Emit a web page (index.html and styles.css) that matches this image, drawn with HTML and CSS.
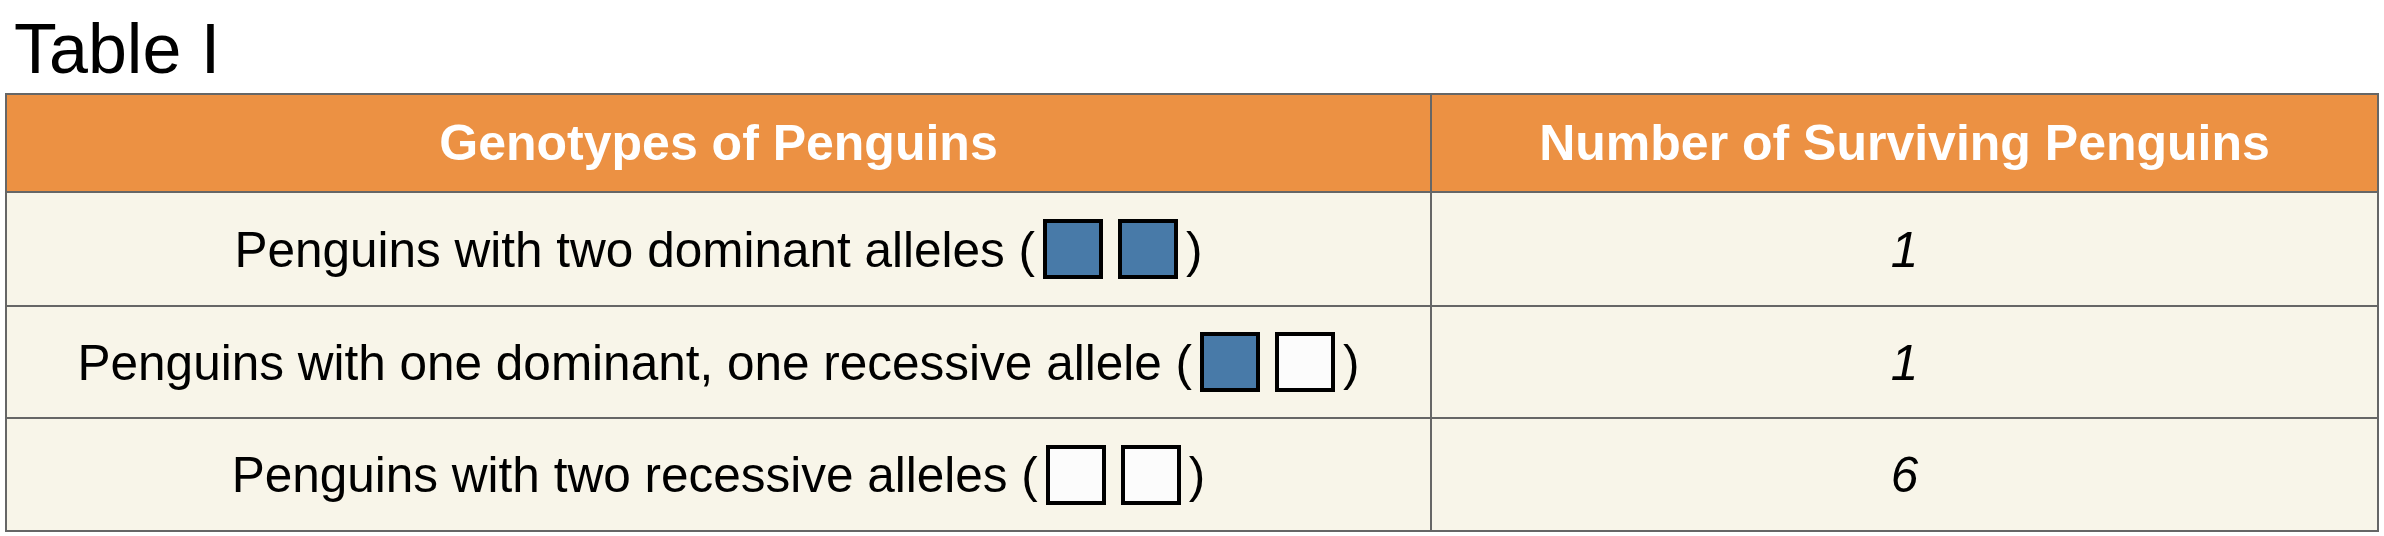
FILE: index.html
```html
<!DOCTYPE html>
<html lang="en">
<head>
<meta charset="utf-8">
<title>Table I</title>
<link rel="stylesheet" href="styles.css">
</head>
<body>
<div class="page">
  <h1 class="title">Table I</h1>
  <div class="table">
    <div class="cell head left">Genotypes of Penguins</div>
    <div class="cell head">Number of Surviving Penguins</div>

    <div class="cell left r1">Penguins with two dominant alleles (<span class="sq dom"></span><span class="sq dom"></span>)</div>
    <div class="cell num r1">1</div>

    <div class="cell left r2">Penguins with one dominant, one recessive allele (<span class="sq dom"></span><span class="sq rec"></span>)</div>
    <div class="cell num r2">1</div>

    <div class="cell left r3">Penguins with two recessive alleles (<span class="sq rec"></span><span class="sq rec"></span>)</div>
    <div class="cell num r3">6</div>
  </div>
</div>
</body>
</html>
```

FILE: styles.css
```css
html, body {
  margin: 0;
  padding: 0;
  background: #ffffff;
}

.page {
  width: 2384px;
  padding: 0 5px;
  box-sizing: border-box;
  font-family: "Liberation Sans", Arial, sans-serif;
  color: #000;
}

.title {
  margin: 0;
  padding: 14px 0 9px 9px;
  font-size: 70px;
  line-height: 70px;
  font-weight: normal;
}

.table {
  display: grid;
  grid-template-columns: 1425px 1fr;
  grid-template-rows: 98px 114px 112px 113px;
  border: 2px solid #666666;
  border-bottom: none;
  background: #f8f5e9;
}

.cell {
  display: flex;
  align-items: center;
  justify-content: center;
  border-bottom: 2px solid #666666;
  font-size: 49.5px;
  white-space: nowrap;
}

.cell.left {
  border-right: 2px solid #666666;
}

.cell.head {
  background: #ec9143;
  color: #ffffff;
  font-weight: bold;
  font-size: 50px;
}

.cell.num {
  font-style: italic;
}

.sq {
  display: inline-block;
  width: 60px;
  height: 60px;
  box-sizing: border-box;
  border: 4px solid #000;
  vertical-align: -17px;
  margin-left: 8px;
}

.sq + .sq {
  margin-left: 15px;
  margin-right: 8px;
}

.sq.dom {
  background: #487aa8;
}

.sq.rec {
  background: #fcfcfc;
}
```
